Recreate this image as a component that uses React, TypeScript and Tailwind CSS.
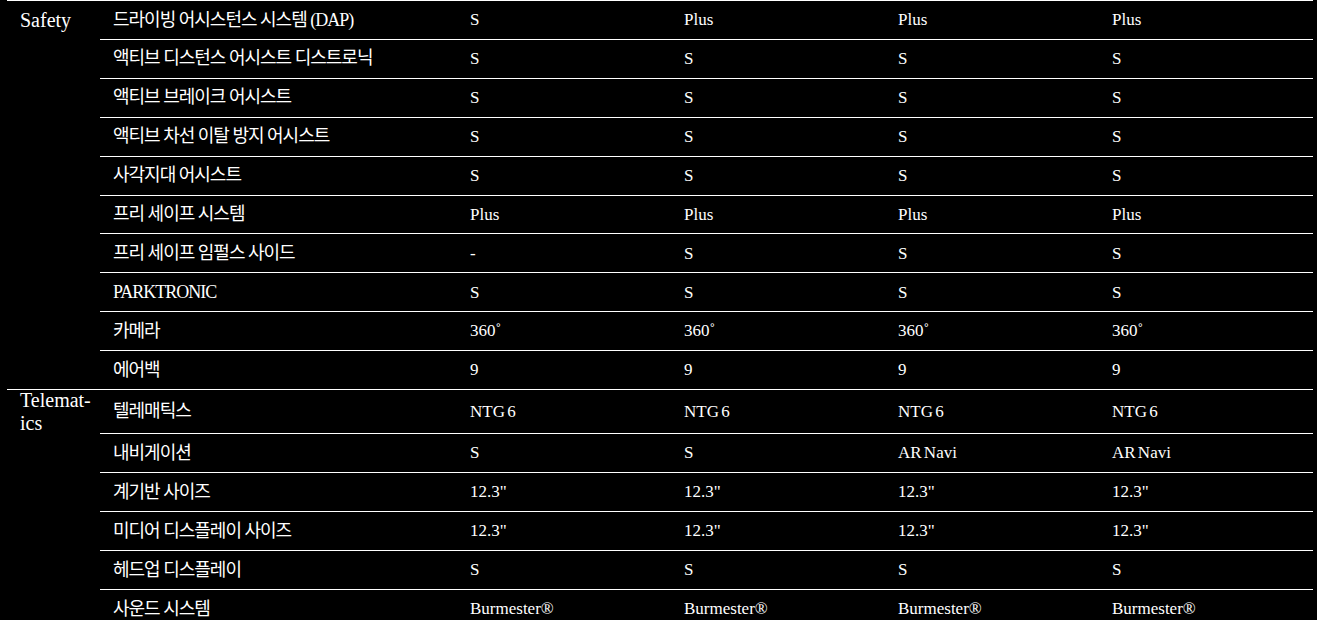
const groups = [
  {
    name: "Safety",
    first: "h-[38px]",
    rest: "h-[38.9px]",
    rows: [
      ["드라이빙 어시스턴스 시스템 (DAP)", "S", "Plus", "Plus", "Plus"],
      ["액티브 디스턴스 어시스트 디스트로닉", "S", "S", "S", "S"],
      ["액티브 브레이크 어시스트", "S", "S", "S", "S"],
      ["액티브 차선 이탈 방지 어시스트", "S", "S", "S", "S"],
      ["사각지대 어시스트", "S", "S", "S", "S"],
      ["프리 세이프 시스템", "Plus", "Plus", "Plus", "Plus"],
      ["프리 세이프 임펄스 사이드", "-", "S", "S", "S"],
      ["PARKTRONIC", "S", "S", "S", "S"],
      ["카메라", "360˚", "360˚", "360˚", "360˚"],
      ["에어백", "9", "9", "9", "9"],
    ],
  },
  {
    name: "Telematics",
    first: "h-[43px]",
    rest: "h-[39px]",
    rows: [
      ["텔레매틱스", "NTG 6", "NTG 6", "NTG 6", "NTG 6"],
      ["내비게이션", "S", "S", "AR Navi", "AR Navi"],
      ["계기반 사이즈", '12.3"', '12.3"', '12.3"', '12.3"'],
      ["미디어 디스플레이 사이즈", '12.3"', '12.3"', '12.3"', '12.3"'],
      ["헤드업 디스플레이", "S", "S", "S", "S"],
      ["사운드 시스템", "Burmester®", "Burmester®", "Burmester®", "Burmester®"],
    ],
  },
];

export default function App() {
  return (
    <div className="h-[620px] overflow-hidden bg-black text-white font-['Liberation_Serif','Noto_Sans_CJK_KR',serif]">
      <div className="ml-[7px] w-[1306px]">
        {groups.map((group) => (
          <div key={group.name} className="flex border-t border-white">
            <div className="w-[93px] shrink-0">
              <div className={`flex items-center pl-[13px] text-[20px] leading-[23px] ${group.first}`}>
                {group.name === "Telematics" ? (
                  <span>
                    Telemat-
                    <br />
                    ics
                  </span>
                ) : (
                  <span>{group.name}</span>
                )}
              </div>
            </div>
            <div className="flex flex-1 flex-col">
              {group.rows.map((row, i) => (
                <div
                  key={row[0]}
                  className={`grid grid-cols-[357px_repeat(4,214px)] items-center ${
                    i === 0 ? group.first : `border-t border-white ${group.rest}`
                  }`}
                >
                  <span className="pl-[13px] text-[18px] tracking-[-1px]">{row[0]}</span>
                  {row.slice(1).map((v, j) => (
                    <span key={j} className="pl-[13px] text-[17px] [word-spacing:-2px]">
                      {v}
                    </span>
                  ))}
                </div>
              ))}
            </div>
          </div>
        ))}
      </div>
    </div>
  );
}
